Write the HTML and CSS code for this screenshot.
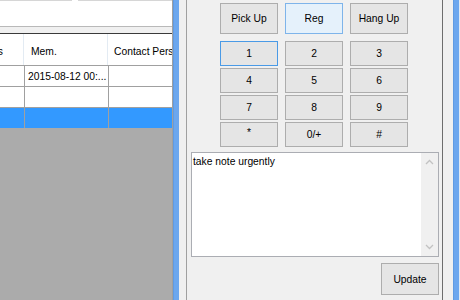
FILE: index.html
```html
<!DOCTYPE html>
<html>
<head>
<meta charset="utf-8">
<link rel="stylesheet" href="styles.css">
</head>
<body>
<div class="screen">
  <div class="left">
    <div class="topbox">
      <div class="edge e1"></div>
      <div class="edge e2"></div>
    </div>
    <div class="hline"></div>
    <div class="strip"></div>
    <div class="grid">
      <div class="row head">
        <div class="cell c1"><span class="clip">Status</span></div>
        <div class="cell c2">Mem.</div>
        <div class="cell c3">Contact Person</div>
      </div>
      <div class="row">
        <div class="cell c1"></div>
        <div class="cell c2 data">2015-08-12 00:...</div>
        <div class="cell c3"></div>
      </div>
      <div class="row">
        <div class="cell c1"></div>
        <div class="cell c2"></div>
        <div class="cell c3"></div>
      </div>
      <div class="row sel">
        <div class="cell c1"></div>
        <div class="cell c2"></div>
        <div class="cell c3"></div>
      </div>
    </div>
  </div>
  <div class="frame"></div>
  <div class="gapl"></div>
  <div class="right">
    <div class="toprow">
      <div class="btn">Pick Up</div>
      <div class="btn hover">Reg</div>
      <div class="btn">Hang Up</div>
    </div>
    <div class="keypad">
      <div class="btn focus">1</div>
      <div class="btn">2</div>
      <div class="btn">3</div>
      <div class="btn">4</div>
      <div class="btn">5</div>
      <div class="btn">6</div>
      <div class="btn">7</div>
      <div class="btn">8</div>
      <div class="btn">9</div>
      <div class="btn star">*</div>
      <div class="btn">0/+</div>
      <div class="btn">#</div>
    </div>
    <div class="memo">
      <div class="memotext">take note urgently</div>
      <div class="vscroll">
        <svg width="9" height="6" viewBox="0 0 9 6"><polyline points="1,5 4.5,1.5 8,5" fill="none" stroke="#c2c2c2" stroke-width="1.3"/></svg>
        <svg width="9" height="6" viewBox="0 0 9 6"><polyline points="1,1 4.5,4.5 8,1" fill="none" stroke="#c2c2c2" stroke-width="1.3"/></svg>
      </div>
    </div>
    <div class="actions">
      <div class="btn update">Update</div>
    </div>
  </div>
  <div class="gapr"></div>
  <div class="frame"></div>
  <div class="tail"></div>
</div>
</body>
</html>
```
FILE: styles.css
```css
html, body {
  margin: 0;
  padding: 0;
}
body {
  font-family: "Liberation Sans", Arial, sans-serif;
  font-size: 10.3px;
  color: #000;
  background: #f0f0f0;
}
.screen {
  display: flex;
  width: 460px;
  height: 300px;
  overflow: hidden;
}
.left {
  width: 172px;
  border-right: 1px solid #a0a0a0;
  background: #ababab;
  display: flex;
  flex-direction: column;
}
.topbox {
  height: 26px;
  background: #fff;
  display: flex;
  align-items: flex-start;
}
.edge {
  height: 1px;
  background: #d6d6d6;
}
.e1 { width: 72px; }
.e2 { flex: 1; margin-left: 6px; }
.hline {
  height: 1px;
  background: #b9b9b9;
}
.strip {
  height: 6px;
  background: #f0f0f0;
}
.grid {
  border-top: 1px solid #3a3a3a;
  display: flex;
  flex-direction: column;
}
.row {
  display: flex;
  height: 20px;
  border-bottom: 1px solid #a0a0a0;
  background: #fff;
}
.row.head {
  height: 31px;
}
.row.sel {
  background: #3399ff;
  border-bottom: none;
}
.cell {
  display: flex;
  align-items: center;
  overflow: hidden;
  white-space: nowrap;
  border-right: 1px solid #a0a0a0;
}
.head .cell {
  padding-top: 4px;
  box-sizing: border-box;
  border-right-color: #e3ebf3;
}
.c1 {
  width: 24px;
  justify-content: flex-end;
}
.c1 .clip {
  flex-shrink: 0;
  padding-right: 20px;
}
.c2 {
  width: 84px;
  box-sizing: border-box;
}
.head .c2 { padding-left: 7px; }
.c2.data { padding-left: 3px; }
.c3 {
  flex: 1;
  border-right: none;
}
.head .c3 { padding-left: 6px; }
.frame {
  width: 6px;
  background: #6ca7ee;
  box-shadow: inset 1px 0 0 #5f9be3;
}
.gapl {
  width: 7px;
  background: #f0f0f0;
}
.gapr {
  width: 10px;
  background: #f0f0f0;
}
.tail {
  width: 1px;
  background: #dfe9f5;
}
.right {
  width: 255px;
  border-left: 1px solid #a0a0a0;
  border-right: 1px solid #6d6d6d;
  background: #f0f0f0;
  display: flex;
  flex-direction: column;
  padding-top: 3px;
}
.btn {
  box-sizing: border-box;
  border: 1px solid #adadad;
  background: #e5e5e5;
  display: flex;
  align-items: center;
  justify-content: center;
  white-space: nowrap;
}
.btn.hover {
  background: #e5f1fb;
  border-color: #7eb4ea;
}
.btn.focus {
  border-color: #4a9ae6;
}
.btn.star {
  align-items: flex-start;
  padding-top: 4px;
}
.toprow {
  display: flex;
  gap: 7px;
  margin-left: 33px;
}
.toprow .btn {
  width: 58px;
  height: 31px;
}
.keypad {
  display: grid;
  grid-template-columns: 58px 58px 58px;
  grid-auto-rows: 25px;
  column-gap: 7px;
  row-gap: 2px;
  margin-left: 33px;
  margin-top: 7px;
}
.memo {
  margin: 5px 3px 0 4px;
  height: 105px;
  box-sizing: border-box;
  border: 1px solid #abadb3;
  background: #fff;
  display: flex;
}
.memotext {
  flex: 1;
  padding: 3px 0 0 1px;
}
.vscroll {
  width: 17px;
  background: #f0f0f0;
  display: flex;
  flex-direction: column;
  justify-content: space-between;
  align-items: center;
  padding: 6px 0 6px;
}
.actions {
  display: flex;
  justify-content: flex-end;
  margin: 6px 3px 0 0;
}
.btn.update {
  width: 58px;
  height: 32px;
}
```
